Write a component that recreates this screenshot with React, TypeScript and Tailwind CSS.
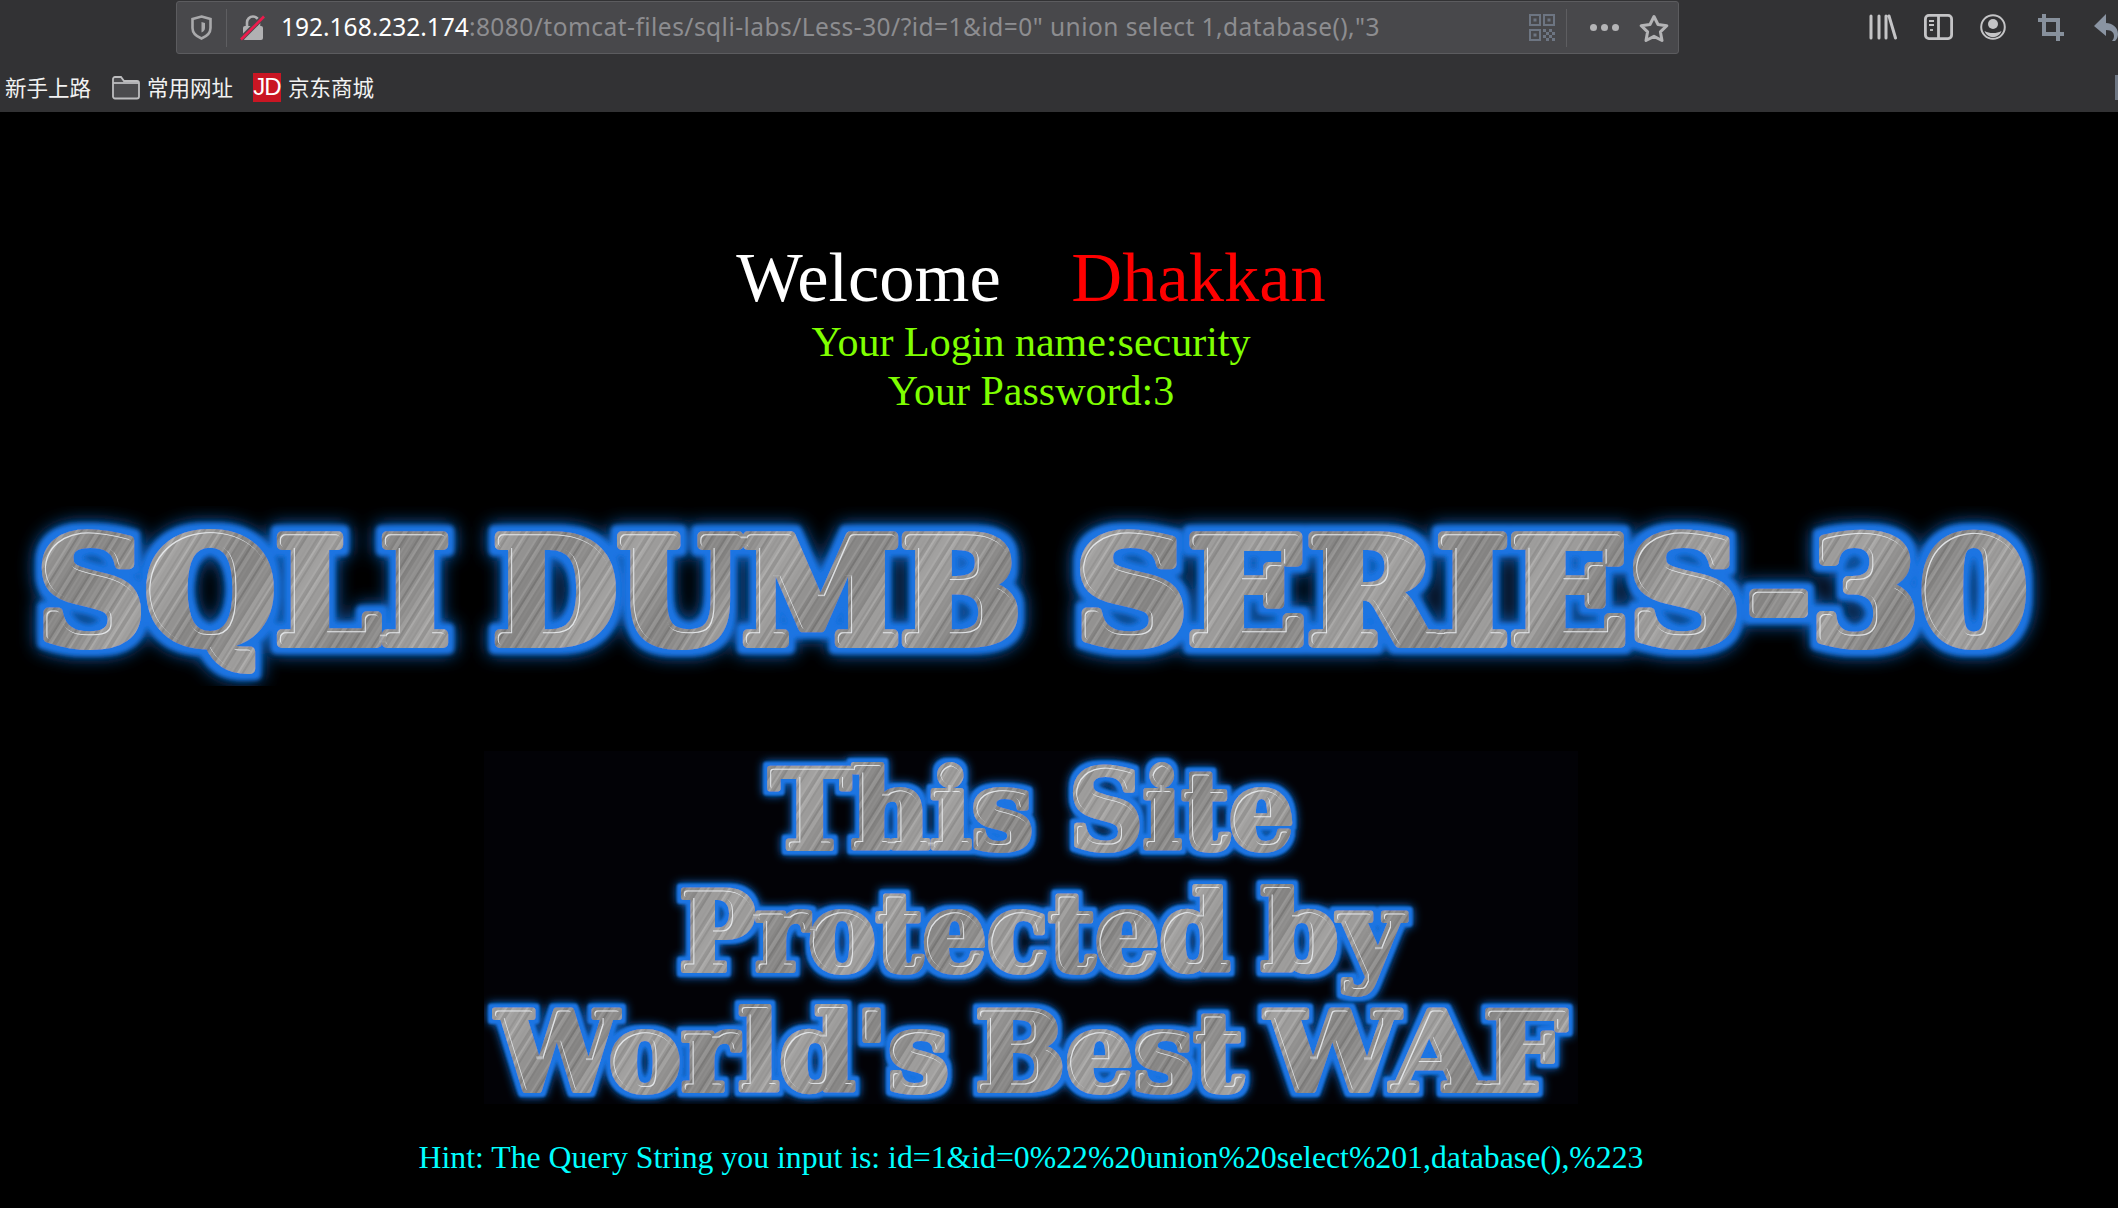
const SERIF = 'font-["Liberation_Serif",serif]'

const hex = (n: number) => Math.round(n).toString(16).padStart(2, '0')

// brushed metal rows, light and dark streaks with slow wide bands
const rows = Array.from({ length: 130 }, (_, i) => {
  const v = 148 + 18 * Math.sin(i * 1.7) * Math.sin(i * 0.37 + 1) + 12 * Math.sin(i * 0.097)
  return { y: i * 2, fill: `#${hex(v)}${hex(v - 1)}${hex(v - 2)}` }
})

const Metal = ({ id, halo, glow, edge }: { id: string; halo: number; glow: number; edge: number }) => (
  <defs>
    <pattern id={id} width="260" height="260" patternUnits="userSpaceOnUse" patternTransform="rotate(-58)">
      {rows.map((r) => (
        <rect key={r.y} y={r.y} width="260" height="2" fill={r.fill} />
      ))}
    </pattern>
    <filter id={`${id}-fx`} x="-12%" y="-30%" width="124%" height="160%">
      <feMorphology in="SourceAlpha" operator="dilate" radius={halo} result="fat" />
      <feFlood floodColor="#1b74e2" result="blue" />
      <feComposite in="blue" in2="fat" operator="in" result="outline" />
      <feGaussianBlur in="outline" stdDeviation={edge} result="rim" />
      <feGaussianBlur in="outline" stdDeviation={glow} result="soft" />
      <feMorphology in="SourceAlpha" operator="erode" radius="2.500" result="thin" />
      <feOffset in="thin" dx="1.200" dy="1.200" result="moved" />
      <feComposite in="thin" in2="moved" operator="out" result="line" />
      <feFlood floodColor="#f4f7fa" floodOpacity="0.75" result="white" />
      <feComposite in="white" in2="line" operator="in" result="shine" />
      <feMerge>
        <feMergeNode in="soft" />
        <feMergeNode in="rim" />
        <feMergeNode in="SourceGraphic" />
        <feMergeNode in="shine" />
      </feMerge>
    </filter>
  </defs>
)

type Word = { text: string; x: number; len: number }
type LineProps = { id: string; words: Word[]; y: number; size: number; thick: number }

const BannerLine = ({ id, words, y, size, thick }: LineProps) => {
  return (
    <g fontSize={size} fontWeight={700} fontFamily='"DejaVu Serif", serif' strokeLinejoin="round">
      {words.map((w) => (
        <text
          key={w.text}
          x={w.x}
          y={y}
          textLength={w.len}
          lengthAdjust="spacingAndGlyphs"
          fill={`url(#${id})`}
          stroke={`url(#${id})`}
          strokeWidth={thick}
          filter={`url(#${id}-fx)`}
        >
          {w.text}
        </text>
      ))}
    </g>
  )
}

const Shield = () => (
  <svg width="21" height="25" viewBox="0 0 21 25" fill="none" stroke="#a9a9ab" strokeWidth="2.600">
    <path d="M10.500 1.500 19.500 4v9c0 5-4 8.500-9 10.500C5.500 21.500 1.500 18 1.500 13V4z" />
    <path d="M10.500 7 14 8v5c0 2-1.500 3.500-3.500 4.500z" fill="#a9a9ab" stroke="none" />
  </svg>
)

const BrokenLock = () => (
  <svg width="26" height="26" viewBox="0 0 26 26" fill="none">
    <path d="M7 11V7.500a6 6 0 0 1 12 0V11" stroke="#b1b1b3" strokeWidth="2.600" />
    <rect x="3" y="11" width="20" height="14" rx="2" fill="#b1b1b3" />
    <path d="M1 24 24 1" stroke="#4a4a4d" strokeWidth="5" />
    <path d="M1 24.500 24 1.500" stroke="#ee1a4c" strokeWidth="2.600" />
  </svg>
)

const FolderIcon = () => (
  <svg width="28" height="25" viewBox="0 0 28 25" fill="#4b4b4e" stroke="#bdbdbf" strokeWidth="1.800">
    <path d="M1 4a2 2 0 0 1 2-2h6l3 4h13a2 2 0 0 1 2 2v13.500a2 2 0 0 1-2 2H3a2 2 0 0 1-2-2z" />
    <path d="M1 8h26" fill="none" />
  </svg>
)

const QrIcon = () => (
  <svg width="26" height="27" viewBox="0 0 26 27" fill="none" stroke="#6d7582" strokeWidth="2">
    <rect x="1" y="1" width="10" height="10" />
    <rect x="15" y="1" width="10" height="10" />
    <rect x="1" y="16" width="10" height="10" />
    <rect x="4.500" y="4.500" width="3" height="3" fill="#6d7582" stroke="none" />
    <rect x="18.500" y="4.500" width="3" height="3" fill="#6d7582" stroke="none" />
    <rect x="4.500" y="19.500" width="3" height="3" fill="#6d7582" stroke="none" />
    <path d="M14 15h3v3h-3zM20 15h3v3h-3zM17 18h3v3h-3zM23 18h3v3h-3zM14 21h3v3h-3zM20 21h3v3h-3zM17 24h3v3h-3zM23 24h3v3h-3z" fill="#6d7582" stroke="none" />
  </svg>
)

const Star = () => (
  <svg width="30" height="28" viewBox="0 0 30 28" fill="none" stroke="#b4b4b6" strokeWidth="3" strokeLinejoin="round">
    <path d="M15 2.500 19 10.500 27.800 11.700 21.400 17.800 23 26.500 15 22.300 7 26.500 8.600 17.800 2.200 11.700 11 10.500z" />
  </svg>
)

const Library = () => (
  <svg width="28" height="26" viewBox="0 0 28 26" stroke="#c4c4c6" strokeWidth="3" strokeLinecap="round">
    <path d="M2 2v22M10 2v22M17 2v22M20 2l6.500 22" />
  </svg>
)

const Sidebar = () => (
  <svg width="29" height="26" viewBox="0 0 29 26" fill="none" stroke="#c4c4c6" strokeWidth="2.800">
    <rect x="1.400" y="1.400" width="26.200" height="23.200" rx="3.500" />
    <path d="M14.500 1.400v23.200" />
    <path d="M5 7h5M5 11h5" strokeWidth="2.200" />
    <path d="M6 16h3" strokeWidth="1.800" />
  </svg>
)

const Profile = () => (
  <svg width="26" height="26" viewBox="0 0 26 26" fill="none">
    <circle cx="13" cy="13" r="11.800" stroke="#c4c4c6" strokeWidth="2" />
    <circle cx="13" cy="10" r="5" fill="#c4c4c6" />
    <path d="M4.500 17c3 1.500 5 2 8.500 2s5.500-.5 8.500-2c-1.500 4-5 6-8.500 6s-7-2-8.500-6z" fill="#c4c4c6" />
  </svg>
)

const CropIcon = () => (
  <svg width="26" height="27" viewBox="0 0 26 27" fill="none" stroke="#87909c" strokeWidth="4">
    <path d="M6 0v20h20" />
    <path d="M0 6h20v21" />
  </svg>
)

const BackArrow = () => (
  <svg width="24" height="27" viewBox="0 0 24 27" fill="#8a94a2" className="shrink-0">
    <path d="M12 0 0 12l12 10v-6c6 0 8 3 8 6 0 2-1 4-2 5h3c2-2 3-4 3-7 0-7-6-11-12-11z" />
  </svg>
)

const App = () => {
  return (
    <div className="flex flex-col h-[1208px] w-[2118px] overflow-hidden bg-black">
      <header className="h-[112px] shrink-0 bg-[#323234]">
        <div className="flex items-center h-[56px] pb-[2px]">
          <div className="flex items-center h-[53px] w-[1503px] ml-[176px] mt-[1px] rounded-[3px] border border-[#5c5c5f] bg-[#48484b]">
            <div className="ml-[14px]">
              <Shield />
            </div>
            <div className="w-px h-[38px] ml-[14px] bg-[#5e5e61]" />
            <div className="ml-[13px]">
              <BrokenLock />
            </div>
            <div className="ml-[15px] w-[1248px] whitespace-nowrap text-[24.500px] text-[#8d8d90] font-['Noto_Sans',sans-serif]">
              <span className="text-white">192.168.232.174</span>
              <span className="tracking-[0.46px]">:8080/tomcat-files/sqli-labs/Less-30/?id=1&amp;id=0" union select 1,database(),"3</span>
            </div>
            <QrIcon />
            <div className="w-px h-[38px] ml-[11px] bg-[#5e5e61]" />
            <div className="flex gap-[4px] ml-[23px]">
              <span className="w-[7px] h-[7px] rounded-full bg-[#b4b4b6]" />
              <span className="w-[7px] h-[7px] rounded-full bg-[#b4b4b6]" />
              <span className="w-[7px] h-[7px] rounded-full bg-[#b4b4b6]" />
            </div>
            <div className="ml-[20px]">
              <Star />
            </div>
          </div>
          <div className="flex items-center ml-[190px] gap-[27px]">
            <Library />
            <Sidebar />
            <Profile />
            <div className="ml-[5px]">
              <CropIcon />
            </div>
            <div className="ml-[3px]">
              <BackArrow />
            </div>
          </div>
        </div>
        <div className="flex items-center h-[56px] pt-[6px] pl-[5px] text-[21.500px] text-[#f2f2f2] font-['Noto_Sans_CJK_SC',sans-serif]">
          <span>新手上路</span>
          <span className="ml-[21px]">
            <FolderIcon />
          </span>
          <span className="ml-[7px]">常用网址</span>
          <span className="flex items-center justify-center w-[28px] h-[29px] ml-[20px] bg-[#c91623] text-[24px] tracking-[-1px] text-white font-['Liberation_Sans',sans-serif]">
            JD
          </span>
          <span className="ml-[7px]">京东商城</span>
          <span className="w-[3px] h-[25px] ml-auto bg-[#6d7582]" />
        </div>
      </header>

      <main className={`flex flex-col items-center w-[2062px] text-center ${SERIF}`}>
        <h1 className="mt-[129px] h-[72px] leading-[72px] text-[70.500px] font-normal text-white whitespace-pre">
          Welcome{'    '}
          <span className="text-[#ff0000]">Dhakkan</span>
        </h1>
        <p className="mt-[5px] leading-[49px] text-[42px] text-[#7fff00]">Your Login name:security</p>
        <p className="leading-[49px] text-[42px] text-[#7fff00]">Your Password:3</p>

        <svg width="2040" height="180" viewBox="0 0 2040 180" className="mt-[90px] shrink-0">
          <Metal id="m1" halo={6} glow={9} edge={2} />
          <BannerLine
            id="m1"
            y={137}
            size={146}
            thick={10}
            words={[
              { text: 'SQLI', x: 26, len: 413 },
              { text: 'DUMB', x: 482, len: 528 },
              { text: 'SERIES-30', x: 1064, len: 953 },
            ]}
          />
        </svg>

        <svg width="1094" height="353" viewBox="0 0 1094 353" className="mt-[65px] shrink-0 bg-[#020206]">
          <Metal id="m2" halo={3.500} glow={5} edge={1.200} />
          <BannerLine
            id="m2"
            y={97}
            size={108}
            thick={6}
            words={[
              { text: 'This', x: 285, len: 264 },
              { text: 'Site', x: 585, len: 225 },
            ]}
          />
          <BannerLine
            id="m2"
            y={219}
            size={108}
            thick={6}
            words={[
              { text: 'Protected', x: 195, len: 551 },
              { text: 'by', x: 777, len: 142 },
            ]}
          />
          <BannerLine
            id="m2"
            y={339}
            size={108}
            thick={6}
            words={[
              { text: "World's", x: 12, len: 453 },
              { text: 'Best', x: 491, len: 268 },
              { text: 'WAF', x: 782, len: 301 },
            ]}
          />
        </svg>

        <p className="mt-[35px] leading-[38px] text-[31.750px] text-[#00ffff] whitespace-nowrap">
          Hint: The Query String you input is: id=1&amp;id=0%22%20union%20select%201,database(),%223
        </p>
      </main>
    </div>
  )
}

export default App
